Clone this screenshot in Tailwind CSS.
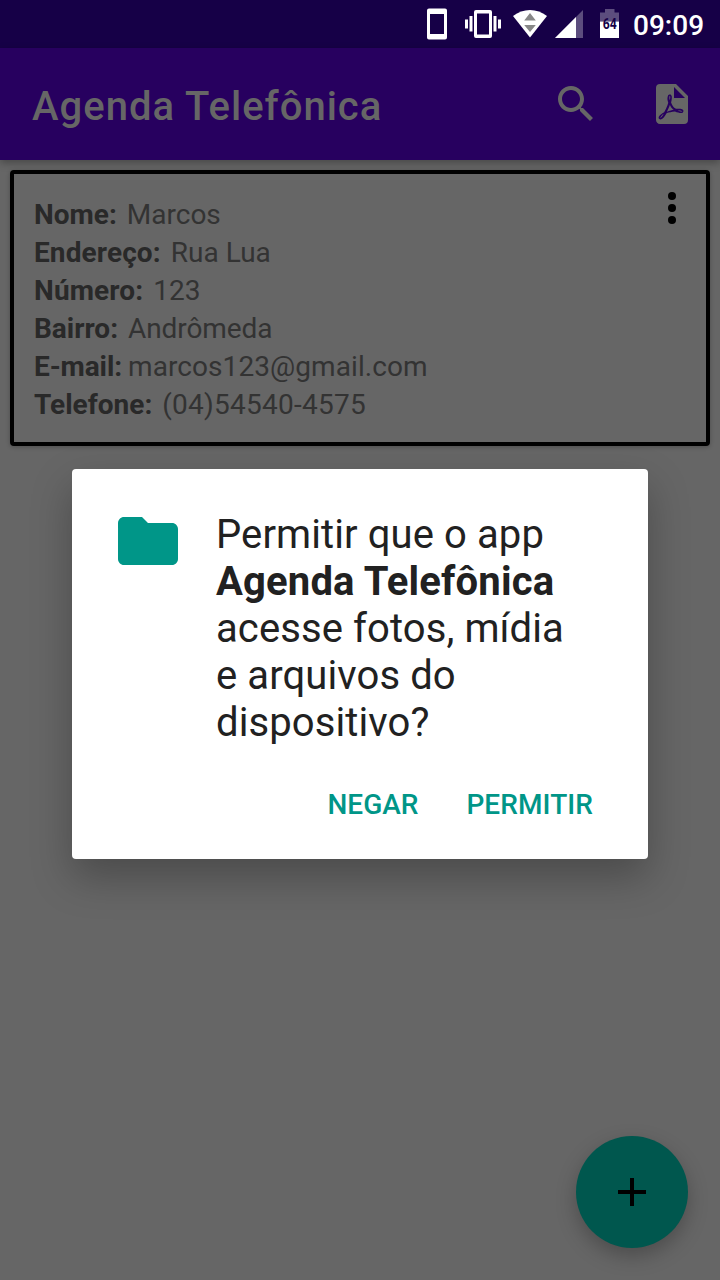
<!DOCTYPE html>
<html lang="pt-BR">
<head>
<meta charset="utf-8">
<title>Agenda Telefônica</title>
<script src="https://cdn.jsdelivr.net/npm/@tailwindcss/browser@4"></script>
</head>
<body class="relative flex h-[1280px] w-[720px] flex-col overflow-hidden bg-[#666666] font-[Roboto,sans-serif]">
  <!-- Status bar -->
  <div class="flex h-12 shrink-0 items-center justify-end bg-[#160047] pr-4 text-white">
    <svg class="h-12 w-[213px] shrink-0" viewBox="420 0 213 48" fill="#fff">
      <path fill-rule="evenodd" d="M429 8.5h16a2 2 0 0 1 2 2v27a2 2 0 0 1-2 2h-16a2 2 0 0 1-2-2v-27a2 2 0 0 1 2-2zM430 14v20h14V14z"/>
      <path fill-rule="evenodd" d="M476 10h14a2 2 0 0 1 2 2v24a2 2 0 0 1-2 2h-14a2 2 0 0 1-2-2V12a2 2 0 0 1 2-2zM477 13.5v21h12v-21z"/>
      <path d="M465 19.5h3v9h-3zM469.500 16h3v15.500h-3zM493.500 16h3v15.500h-3zM498 19.500h3v9h-3z"/>
      <path d="M513 16C523 8 537 8 547 16L530 37.500z"/>
      <path fill="#888" d="M530 13l5.800 7.500h-11.600zM524.200 25h11.600l-5.800 7z"/>
      <path fill-opacity=".3" d="M583 10v28h-28z"/>
      <path d="M576 17v21h-21z"/>
      <path fill-opacity=".3" d="M605 9h9.500v3.500h4.500v9h-19v-9h5z"/>
      <path d="M600 21.500h19V38h-19z"/>
      <text x="609.700" y="29" text-anchor="middle" font-family="Roboto" font-weight="700" font-size="14.500" textLength="14" lengthAdjust="spacingAndGlyphs" fill="#160047">64</text>
    </svg>
    <span class="w-[71px] whitespace-nowrap pt-[3px] text-[28px] font-medium leading-[50px]">09:09</span>
  </div>

  <!-- App bar -->
  <header class="z-10 flex h-28 shrink-0 items-center bg-[#27005f] pl-8 pr-6 pt-1 text-[#666666] shadow-[0_3px_8px_rgba(0,0,0,0.3)]">
    <h1 class="grow text-[40px] font-medium leading-[47px] tracking-[1px]">Agenda Telefônica</h1>
    <svg class="mb-1 h-12 w-12" viewBox="0 0 24 24" fill="currentColor"><path d="M15.500 14h-.79l-.28-.27C15.410 12.590 16 11.110 16 9.500 16 5.910 13.090 3 9.500 3S3 5.910 3 9.500 5.910 16 9.500 16c1.610 0 3.090-.59 4.230-1.570l.27.28v.79l5 4.990L20.490 19l-4.990-5zm-6 0C7.010 14 5 11.990 5 9.500S7.010 5 9.500 5 14 7.010 14 9.500 11.990 14 9.500 14z"/></svg>
    <svg class="mb-1 ml-12 h-12 w-12" viewBox="1 0 24 24" fill="currentColor"><path d="M14,9H19.5L14,3.5V9M7,2H15L21,8V20A2,2 0 0,1 19,22H7C5.89,22 5,21.1 5,20V4A2,2 0 0,1 7,2M11.93,12.44C12.34,13.34 12.86,14.08 13.46,14.59L13.87,14.91C13,15.07 11.8,15.35 10.53,15.84V15.84L10.42,15.88L10.92,14.84C11.37,13.97 11.7,13.18 11.93,12.44M18.41,16.25C18.59,16.07 18.68,15.84 18.69,15.59C18.72,15.39 18.67,15.2 18.57,15.04C18.28,14.57 17.53,14.35 16.29,14.35L15,14.42L14.13,13.84C13.5,13.32 12.93,12.41 12.53,11.28L12.57,11.14C12.9,9.81 13.21,8.2 12.55,7.54C12.39,7.38 12.17,7.3 11.94,7.3H11.7C11.33,7.3 11,7.69 10.91,8.07C10.54,9.4 10.76,10.13 11.13,11.34V11.35C10.88,12.23 10.56,13.25 10.05,14.28L9.09,16.08L8.2,16.57C7,17.32 6.43,18.16 6.32,18.69C6.28,18.88 6.3,19.05 6.37,19.23L6.4,19.28L6.88,19.59L7.32,19.7C8.13,19.7 9.05,18.75 10.29,16.63L10.47,16.56C11.5,16.23 12.78,16 14.5,15.81C15.53,16.32 16.74,16.55 17.5,16.55C17.94,16.55 18.24,16.44 18.41,16.25M18,15.54L18.09,15.65C18.08,15.75 18.05,15.76 18,15.78H17.96L17.77,15.8C17.31,15.8 16.6,15.61 15.87,15.29C15.96,15.19 16,15.19 16.1,15.19C17.5,15.19 17.9,15.44 18,15.54M8.83,17C8.18,18.19 7.59,18.85 7.14,19C7.19,18.62 7.64,17.96 8.35,17.31L8.83,17M11.85,10.09C11.62,9.19 11.61,8.46 11.78,8.04L11.85,7.92L12,7.97C12.17,8.21 12.19,8.53 12.09,9.07L12.06,9.23L11.9,10.05L11.85,10.09Z"/></svg>
  </header>

  <!-- Contact card -->
  <main class="px-2.5 pt-2.5">
    <section class="flex h-[276px] justify-between rounded border-4 border-black bg-[#666666] pl-5 pr-2.5 shadow-[0_1px_4px_rgba(0,0,0,0.25)]">
      <dl class="pt-[22px] text-[28px] leading-[38px] text-[#333333]">
        <div class="flex gap-2.5"><dt class="font-bold text-[#292929]">Nome:</dt><dd>Marcos</dd></div>
        <div class="flex gap-2.5"><dt class="font-bold tracking-[0.12px] text-[#292929]">Endereço:</dt><dd>Rua Lua</dd></div>
        <div class="flex gap-2.5"><dt class="font-bold tracking-[0.12px] text-[#292929]">Número:</dt><dd>123</dd></div>
        <div class="flex gap-2.5"><dt class="font-bold text-[#292929]">Bairro:</dt><dd class="tracking-[-0.1px]">Andrômeda</dd></div>
        <div class="flex gap-1.5"><dt class="font-bold tracking-[-0.1px] text-[#292929]">E-mail:</dt><dd class="tracking-[0.08px]">marcos123@gmail.com</dd></div>
        <div class="flex gap-2.5"><dt class="font-bold text-[#292929]">Telefone:</dt><dd class="tracking-[0.25px]">(04)54540-4575</dd></div>
      </dl>
      <svg class="mt-2.5 h-12 w-12" viewBox="0 0 24 24" fill="#000"><circle cx="12" cy="6" r="2"/><circle cx="12" cy="12" r="2"/><circle cx="12" cy="18" r="2"/></svg>
    </section>
  </main>

  <!-- Floating add button -->
  <button class="absolute bottom-8 right-8 flex h-28 w-28 items-center justify-center rounded-full bg-[#00574e] shadow-[0_8px_20px_rgba(0,0,0,0.25)]">
    <svg class="h-12 w-12" viewBox="0 0 24 24" fill="#000"><path d="M19 13h-6v6h-2v-6H5v-2h6V5h2v6h6v2z"/></svg>
  </button>

  <!-- Permission dialog -->
  <div class="absolute left-[72px] top-[469px] z-20 flex h-[390px] w-[576px] flex-col rounded bg-white shadow-[0_18px_40px_rgba(0,0,0,0.27)]">
    <div class="flex gap-8 pl-10 pt-9">
      <svg class="h-[72px] w-[72px] shrink-0" viewBox="0 0 24 24" fill="#009688"><path d="M10 4H4c-1.100 0-1.990.9-1.990 2L2 18c0 1.100.9 2 2 2h16c1.100 0 2-.9 2-2V8c0-1.100-.9-2-2-2h-8l-2-2z"/></svg>
      <p class="whitespace-nowrap pt-1.5 text-[40px] leading-[47px] tracking-[0.1px] text-[#212121]">Permitir que o app<br><b class="tracking-[0.16px]">Agenda Telefônica</b><br>acesse fotos, mídia<br>e arquivos do<br>dispositivo?</p>
    </div>
    <div class="mt-10 flex justify-end gap-12 pr-[55px] text-[28px] font-medium leading-[38px] text-[#009688]">
      <button>NEGAR</button>
      <button class="tracking-[0.08px]">PERMITIR</button>
    </div>
  </div>
</body>
</html>
